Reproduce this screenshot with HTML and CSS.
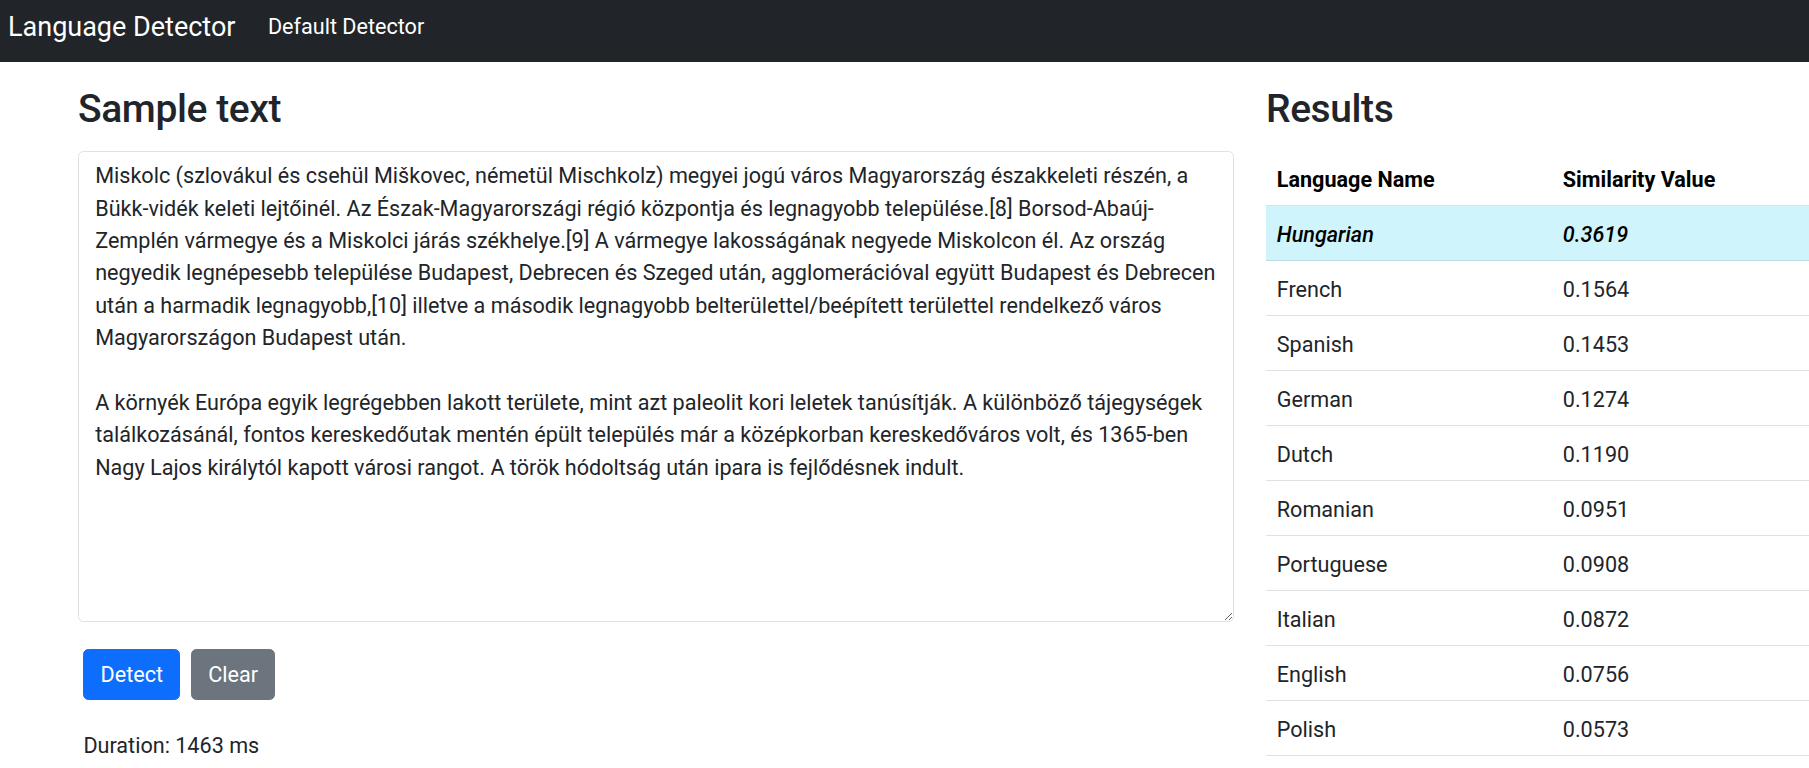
FILE: index.html
```html
<!DOCTYPE html>
<html lang="hu">
<head>
<meta charset="utf-8">
<title>Language Detector</title>
<link rel="stylesheet" href="styles.css">
</head>
<body>
<nav class="navbar">
  <a class="brand" href="#">Language Detector</a>
  <a class="nav-link" href="#">Default Detector</a>
</nav>
<main class="main">
  <section class="col-left">
    <h2 class="title">Sample text</h2>
    <textarea class="sample">Miskolc (szlovákul és csehül Miškovec, németül Mischkolz) megyei jogú város Magyarország északkeleti részén, a Bükk-vidék keleti lejtőinél. Az Észak-Magyarországi régió központja és legnagyobb települése.[8] Borsod-Abaúj-Zemplén vármegye és a Miskolci járás székhelye.[9] A vármegye lakosságának negyede Miskolcon él. Az ország negyedik legnépesebb települése Budapest, Debrecen és Szeged után, agglomerációval együtt Budapest és Debrecen után a harmadik legnagyobb,[10] illetve a második legnagyobb belterülettel/beépített területtel rendelkező város Magyarországon Budapest után.

A környék Európa egyik legrégebben lakott területe, mint azt paleolit kori leletek tanúsítják. A különböző tájegységek találkozásánál, fontos kereskedőutak mentén épült település már a középkorban kereskedőváros volt, és 1365-ben Nagy Lajos királytól kapott városi rangot. A török hódoltság után ipara is fejlődésnek indult.</textarea>
    <div class="actions">
      <button class="btn btn-primary" type="button">Detect</button>
      <button class="btn btn-secondary" type="button">Clear</button>
    </div>
    <div class="duration">Duration: 1463 ms</div>
  </section>
  <section class="col-right">
    <h2 class="title">Results</h2>
    <table class="results">
      <colgroup><col class="c-name"><col></colgroup>
      <thead>
        <tr><th>Language Name</th><th>Similarity Value</th></tr>
      </thead>
      <tbody>
        <tr class="row-info"><td>Hungarian</td><td>0.3619</td></tr>
        <tr><td>French</td><td>0.1564</td></tr>
        <tr><td>Spanish</td><td>0.1453</td></tr>
        <tr><td>German</td><td>0.1274</td></tr>
        <tr><td>Dutch</td><td>0.1190</td></tr>
        <tr><td>Romanian</td><td>0.0951</td></tr>
        <tr><td>Portuguese</td><td>0.0908</td></tr>
        <tr><td>Italian</td><td>0.0872</td></tr>
        <tr><td>English</td><td>0.0756</td></tr>
        <tr><td>Polish</td><td>0.0573</td></tr>
      </tbody>
    </table>
  </section>
</main>
</body>
</html>
```
FILE: styles.css
```css
html {
  font-size: 21.6px;
}

body {
  margin: 0;
  font-family: Roboto, "Segoe UI", "Liberation Sans", sans-serif;
  font-size: 1rem;
  line-height: 1.5;
  color: #212529;
  background: #fff;
  overflow-x: hidden;
}

.navbar {
  display: flex;
  align-items: flex-start;
  height: 62px;
  box-sizing: border-box;
  padding-left: 8px;
  background: #212529;
}

.brand {
  margin-top: 7px;
  margin-right: 21.6px;
  font-size: 27px;
  line-height: 1.5;
  color: #fff;
  text-decoration: none;
}

.nav-link {
  margin-top: 11px;
  padding: 0 10.8px;
  line-height: 1.5;
  color: #fff;
  text-decoration: none;
}

.main {
  display: flex;
  width: 1782px;
  margin: 21.6px 0 0 61.8px;
}

.col-left {
  width: 1188px;
  padding: 0 16.2px;
  box-sizing: border-box;
  flex: none;
}

.col-right {
  width: 594px;
  padding: 0 16.2px;
  box-sizing: border-box;
  flex: none;
}

.title {
  margin: 0 0 18.4px;
  padding-top: 1px;
  height: 48.2px;
  font-size: 39px;
  font-weight: 500;
  line-height: 48px;
  letter-spacing: -0.4px;
  color: #212529;
}

.sample {
  display: block;
  width: 100%;
  height: 471px;
  margin: 0;
  box-sizing: border-box;
  padding: 8.1px 16.2px;
  border: 1px solid #dee2e6;
  border-radius: 5.4px;
  font: inherit;
  line-height: 1.5;
  color: #212529;
  background: #fff;
  resize: vertical;
  outline: none;
}

.actions {
  display: flex;
  margin-top: 21.6px;
}

.btn {
  margin: 5.4px;
  padding: 9.1px 16.2px 7.1px;
  border: 1px solid transparent;
  border-radius: 5.4px;
  font: inherit;
  line-height: 1.5;
  color: #fff;
  cursor: pointer;
}

.btn-primary {
  background: #0d6efd;
  border-color: #0d6efd;
}

.btn-secondary {
  background: #6c757d;
  border-color: #6c757d;
}

.duration {
  margin: 24.6px 5.4px 0;
}

.results {
  width: 100%;
  border-collapse: collapse;
  table-layout: fixed;
  color: #212529;
}

.c-name {
  width: 286px;
}

.results th,
.results td {
  padding: 12.6px 10.8px 9px;
  border-bottom: 1px solid #dee2e6;
  text-align: left;
  line-height: 1.5;
}

.results th {
  font-weight: 700;
  color: #000;
}

.row-info td {
  background: #cff4fc;
  border-bottom-color: #badce3;
  font-style: italic;
  font-weight: 500;
  color: #000;
}
```
